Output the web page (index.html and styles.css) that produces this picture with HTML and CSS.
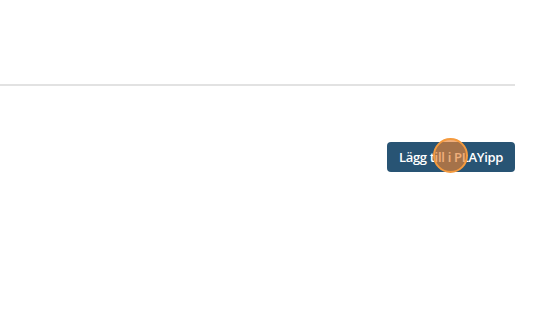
FILE: index.html
```html
<!DOCTYPE html>
<html lang="sv">
<head>
  <meta charset="UTF-8" />
  <title>PLAYipp</title>
  <link rel="stylesheet" href="styles.css">
</head>
<body>
  <div class="page">
    <div class="top"></div>
    <hr class="divider" />
    <div class="actions">
      <button class="add-btn">Lägg till i PLAYipp</button>
      <span class="click-dot"></span>
    </div>
  </div>
</body>
</html>
```

FILE: styles.css
```css
* { box-sizing: border-box; margin: 0; padding: 0; }

body {
  background: #fff;
  font-family: 'Open Sans', sans-serif;
  width: 560px;
  height: 315px;
  overflow: hidden;
}

.page {
  width: 515px;
}

.top {
  height: 84px;
}

.divider {
  border: none;
  height: 2px;
  background: #e2e2e2;
}

.actions {
  position: relative;
  display: flex;
  justify-content: flex-end;
  padding-top: 56px;
}

.add-btn {
  background: #285474;
  color: #fff;
  border: none;
  border-radius: 4px;
  width: 128px;
  height: 30px;
  font-family: 'Open Sans', sans-serif;
  font-weight: 600;
  font-size: 13px;
  letter-spacing: -0.3px;
  cursor: pointer;
}

.click-dot {
  position: absolute;
  left: 433px;
  top: 52px;
  width: 35px;
  height: 35px;
  border-radius: 50%;
  border: 2px solid #f49a3e;
  background: rgba(232, 130, 50, 0.65);
}
```
